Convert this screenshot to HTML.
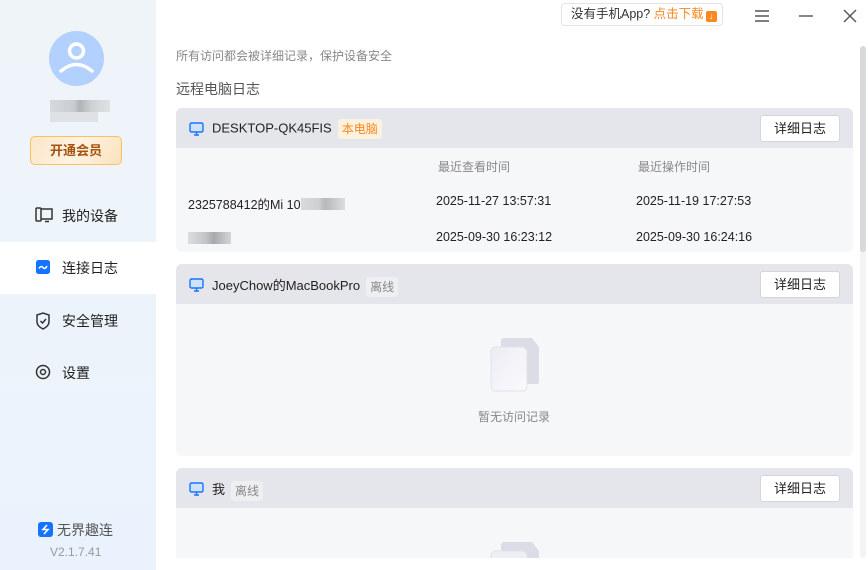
<!DOCTYPE html>
<html><head><meta charset="utf-8"><style>
*{margin:0;padding:0;box-sizing:border-box}
body{width:868px;height:570px;overflow:hidden;background:#fff;font-family:"Liberation Sans","Noto Sans CJK SC",sans-serif;position:relative;color:#222}
.sb{position:absolute;left:0;top:0;width:156px;height:570px;background:linear-gradient(#eff4f8,#eaf3fd)}
.av{position:absolute;left:49px;top:31px;width:55px;height:55px;border-radius:50%;background:#b3d1ff}
.blur{position:absolute;background:#d5d8dc}
.vip{position:absolute;left:30px;top:136px;width:92px;height:29px;border:1px solid #f8c35e;border-radius:5px;background:linear-gradient(120deg,#fbe6c8,#fff3e2 50%,#fae1bd);color:#a4520f;font-size:13px;font-weight:bold;text-align:center;line-height:27px}
.nav{position:absolute;left:0;width:156px;height:52px;font-size:14px;line-height:52px;padding-left:62px;color:#222}
.nav svg{position:absolute;left:35px;top:17px}
.abs{position:absolute;white-space:nowrap}
.card{position:absolute;left:176px;width:677px;background:#f6f7f9;border-radius:6px;overflow:hidden}
.hd{height:40px;background:#e5e6eb;position:relative}
.hd .mon{position:absolute;left:13px;top:14px}
.hd .nm{position:absolute;left:36px;top:11px;font-size:13px;color:#222}
.tag{display:inline-block;font-size:12px;padding:0 4px;height:20px;line-height:20px;border-radius:3px;margin-left:6px;vertical-align:middle}
.btn{position:absolute;right:13px;top:7px;width:80px;height:27px;background:#fff;border:1px solid #d3d5da;border-radius:3px;font-size:13px;text-align:center;line-height:25px;color:#222}
.t12{font-size:12px;color:#888}
.row{font-size:12.5px;color:#222}
</style></head><body>
<div class="sb">
<div class="av"><svg width="55" height="55" viewBox="0 0 55 55"><circle cx="27.5" cy="20" r="7" fill="none" stroke="#fff" stroke-width="3.5"/><path d="M12 40 Q27.5 27 43 40" fill="none" stroke="#fff" stroke-width="3.5" stroke-linecap="round"/></svg></div>
<div class="blur" style="left:50px;top:100px;width:60px;height:12px;background:linear-gradient(90deg,#d7dadd,#c9ccd0 40%,#b0b3b7 50%,#d0d3d6 70%,#e0e3e6)"></div>
<div class="blur" style="left:50px;top:112px;width:48px;height:10px;background:#dfe2e5"></div>
<div class="vip">开通会员</div>
<div class="nav" style="top:190px"><svg width="18" height="16" viewBox="0 0 18 16"><rect x="1" y="1" width="5" height="13" rx="1" fill="none" stroke="#333" stroke-width="1.5"/><path d="M6 2H17V12H6M10 14.5H14" fill="none" stroke="#333" stroke-width="1.5"/></svg>我的设备</div>
<div class="nav" style="top:242px;background:#fff"><svg width="16" height="16" viewBox="0 0 16 16"><rect x="1" y="1" width="14" height="14" rx="2.5" fill="#1673ff"/><path d="M4 9.5Q6 6 8 8.5T12 7" fill="none" stroke="#fff" stroke-width="1.5"/></svg>连接日志</div>
<div class="nav" style="top:295px"><svg width="16" height="18" viewBox="0 0 16 18"><path d="M2 3L8 1L14 3V10Q14 14 8 17Q2 14 2 10Z" fill="none" stroke="#333" stroke-width="1.5"/><path d="M5.5 9L7.5 11L11 7" fill="none" stroke="#333" stroke-width="1.5"/></svg>安全管理</div>
<div class="nav" style="top:347px"><svg width="16" height="16" viewBox="0 0 16 16"><circle cx="8" cy="8" r="6.5" fill="none" stroke="#333" stroke-width="1.5"/><circle cx="8" cy="8" r="2.5" fill="none" stroke="#333" stroke-width="1.5"/></svg>设置</div>
<div class="abs" style="left:38px;top:521px;font-size:14px;color:#555;line-height:18px"><svg width="15" height="15" viewBox="0 0 15 15" style="vertical-align:-2px;margin-right:4px"><rect width="15" height="15" rx="3" fill="#1673ff"/><path d="M9 3L5 7.5H10L6 12" fill="none" stroke="#fff" stroke-width="1.6"/></svg>无界趣连</div>
<div class="abs" style="left:50px;top:545px;font-size:12px;color:#999">V2.1.7.41</div>
</div>

<div class="abs" style="left:561px;top:3px;width:162px;height:23px;border:1px solid #e2e3e6;border-radius:4px;font-size:12.5px;line-height:21px;padding-left:9px;color:#333">没有手机App? <span style="color:#f7891e">点击下载</span><span style="display:inline-block;width:11px;height:11px;background:#f7891e;border-radius:2px;vertical-align:-1px;margin-left:2px;color:#fff;font-size:9px;line-height:11px;text-align:center">↓</span></div>
<svg class="abs" style="left:754px;top:9px" width="16" height="14"><path d="M1 2H15M1 7H15M1 12H15" stroke="#555" stroke-width="1.4"/></svg>
<svg class="abs" style="left:798px;top:9px" width="16" height="14"><path d="M1 7H15" stroke="#555" stroke-width="1.4"/></svg>
<svg class="abs" style="left:842px;top:8px" width="16" height="16"><path d="M2 2L14 14M14 2L2 14" stroke="#555" stroke-width="1.4"/></svg>

<div class="abs t12" style="left:176px;top:47px">所有访问都会被详细记录，保护设备安全</div>
<div class="abs" style="left:176px;top:79px;font-size:14px;color:#555">远程电脑日志</div>
<div class="abs" style="left:860px;top:46px;width:6px;height:512px;background:#f4f4f5;border-radius:3px"></div>
<div class="abs" style="left:860px;top:46px;width:6px;height:206px;background:#d8d9dc;border-radius:3px"></div>

<div class="card" style="top:108px;height:144px">
<div class="hd"><svg class="mon" width="15" height="14"><rect x="1" y="1" width="13" height="9" rx="1.5" fill="#cfe2fb" stroke="#1673ff" stroke-width="1.4"/><path d="M5 13H10M7.5 10V13" stroke="#1673ff" stroke-width="1.4"/></svg><div class="nm">DESKTOP-QK45FIS<span class="tag" style="background:#fdf1df;color:#f7891e">本电脑</span></div><div class="btn">详细日志</div></div>
<div class="abs t12" style="left:262px;top:50px">最近查看时间</div>
<div class="abs t12" style="left:462px;top:50px">最近操作时间</div>
<div class="abs row" style="left:12px;top:86px">2325788412的Mi 10<span style="display:inline-block;width:44px;height:12px;background:linear-gradient(90deg,#d9dadd,#cfd0d3 40%,#b7b8bb 55%,#dcdde0);vertical-align:-1px"></span></div>
<div class="abs row" style="left:260px;top:86px">2025-11-27 13:57:31</div>
<div class="abs row" style="left:460px;top:86px">2025-11-19 17:27:53</div>
<div class="abs" style="left:12px;top:124px;width:43px;height:12px;background:linear-gradient(90deg,#dcdde0,#c4c5c8 40%,#a8a9ad 60%,#d5d6d9)"></div>
<div class="abs row" style="left:260px;top:122px">2025-09-30 16:23:12</div>
<div class="abs row" style="left:460px;top:122px">2025-09-30 16:24:16</div>
</div>

<div class="card" style="top:264px;height:192px">
<div class="hd"><svg class="mon" width="15" height="14"><rect x="1" y="1" width="13" height="9" rx="1.5" fill="#cfe2fb" stroke="#1673ff" stroke-width="1.4"/><path d="M5 13H10M7.5 10V13" stroke="#1673ff" stroke-width="1.4"/></svg><div class="nm">JoeyChow的MacBookPro<span class="tag" style="background:#eeeff1;color:#888">离线</span></div><div class="btn">详细日志</div></div>
<svg class="abs" style="left:314px;top:74px" width="50" height="56"><path d="M14 0H42L49 9V44Q49 46 47 46H14Q11 46 11 43V3Q11 0 14 0Z" fill="#dcdce6"/><rect x="1" y="9" width="36" height="44" rx="5" fill="url(#g1)" stroke="#e2e2ea"/><defs><linearGradient id="g1" x1="0" y1="0" x2="1" y2="1"><stop offset="0" stop-color="#ececf4"/><stop offset="1" stop-color="#fafafd"/></linearGradient></defs></svg>
<div class="abs t12" style="left:302px;top:144px">暂无访问记录</div>
</div>

<div class="card" style="top:468px;height:90px;border-radius:6px 6px 0 0">
<div class="hd"><svg class="mon" width="15" height="14"><rect x="1" y="1" width="13" height="9" rx="1.5" fill="#cfe2fb" stroke="#1673ff" stroke-width="1.4"/><path d="M5 13H10M7.5 10V13" stroke="#1673ff" stroke-width="1.4"/></svg><div class="nm">我<span class="tag" style="background:#eeeff1;color:#888">离线</span></div><div class="btn">详细日志</div></div>
<svg class="abs" style="left:314px;top:74px" width="50" height="56"><path d="M14 0H42L49 9V44Q49 46 47 46H14Q11 46 11 43V3Q11 0 14 0Z" fill="#dcdce6"/><rect x="1" y="9" width="36" height="44" rx="5" fill="#eeeef5" stroke="#e2e2ea"/></svg>
</div>
</body></html>
